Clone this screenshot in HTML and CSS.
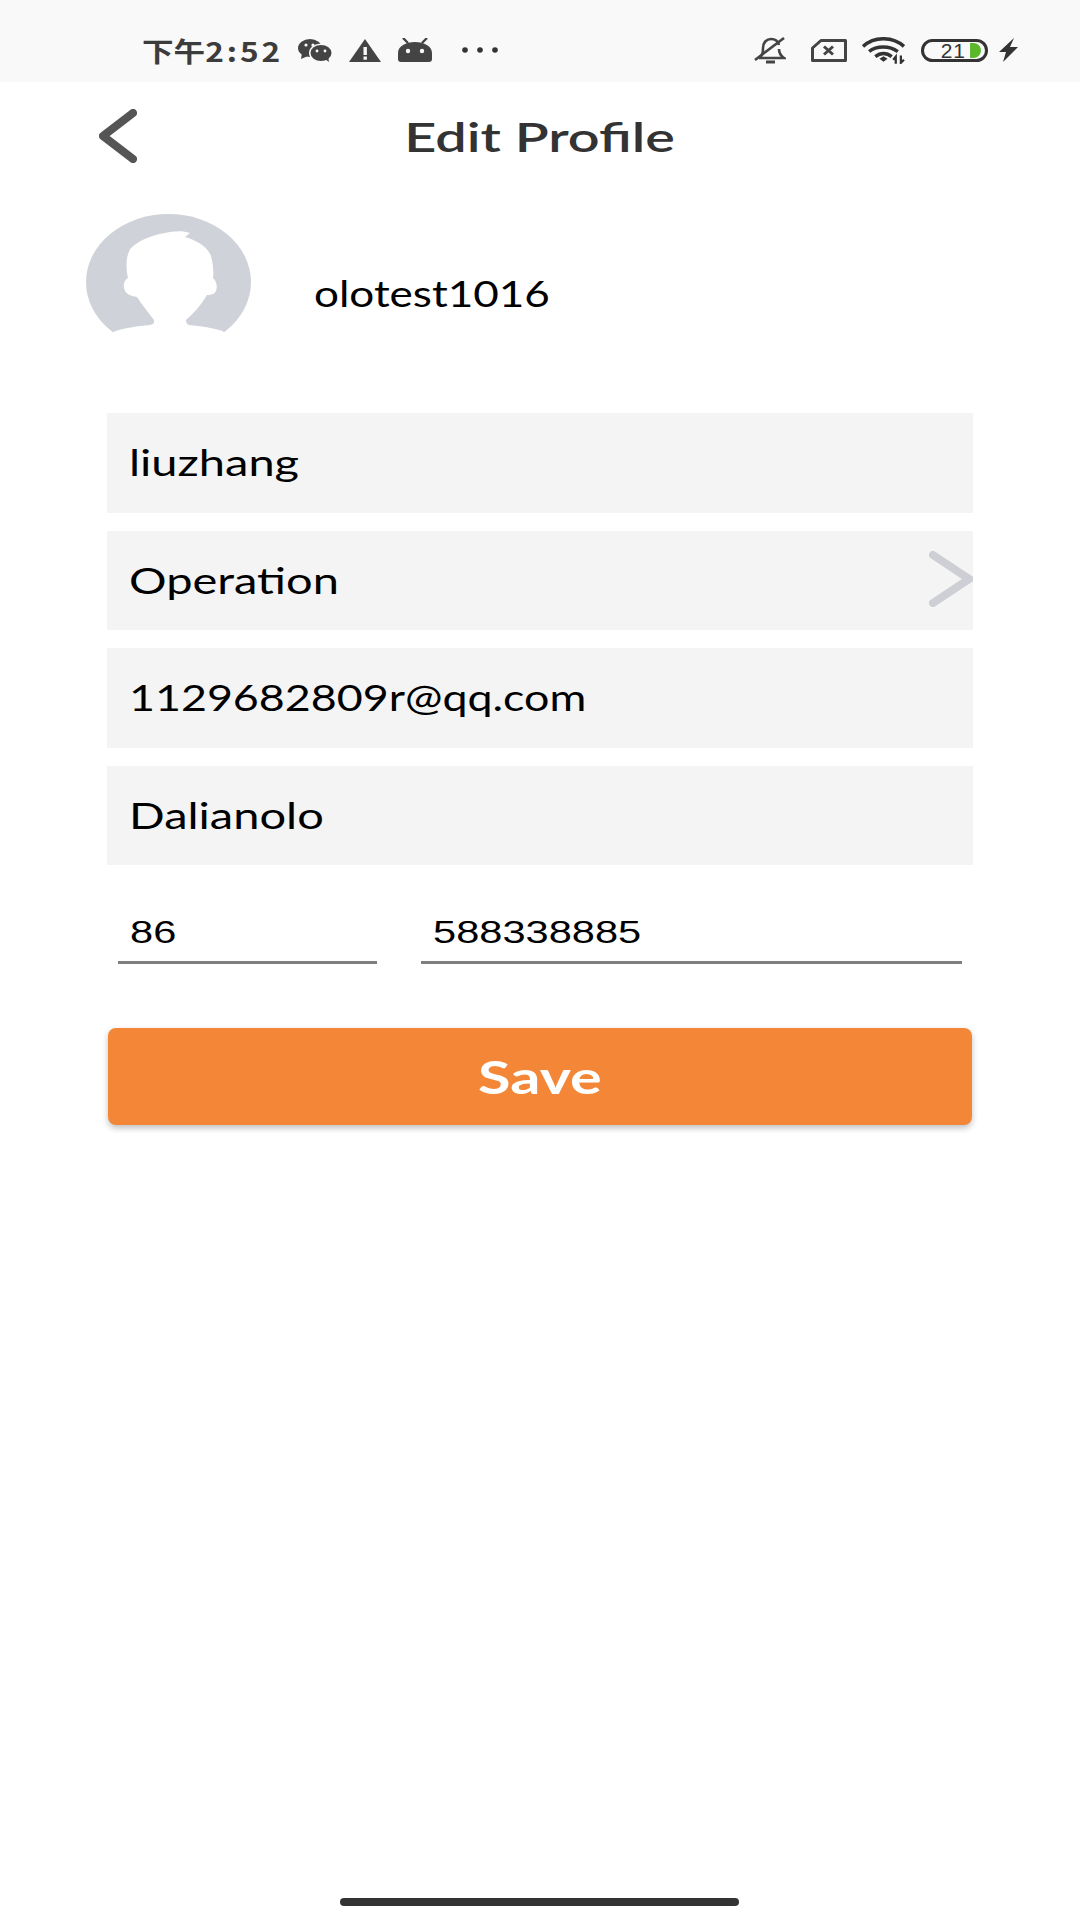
FILE: index.html
```html
<!DOCTYPE html>
<html lang="en">
<head>
<meta charset="utf-8">
<title>Edit Profile</title>
<link rel="stylesheet" href="styles.css">
</head>
<body>
<div class="statusbar">
  <span class="clock">下午<span class="clock-time">2:52</span></span>
  <svg class="ic-wechat" viewBox="0 0 34 23"><ellipse cx="12" cy="9" rx="12" ry="9" fill="#444"/><path d="M4 14 L3 20 L10 17Z" fill="#444"/><ellipse cx="23" cy="14" rx="12" ry="9.5" fill="#f9f9f9"/><ellipse cx="23" cy="14" rx="10.5" ry="8" fill="#444"/><path d="M27 20 L31 23 L30 17Z" fill="#444"/><circle cx="8" cy="6" r="1.6" fill="#f9f9f9"/><circle cx="15" cy="6" r="1.6" fill="#f9f9f9"/><circle cx="19" cy="12" r="1.4" fill="#f9f9f9"/><circle cx="27" cy="12" r="1.4" fill="#f9f9f9"/></svg>
  <svg class="ic-warn" viewBox="0 0 32 23"><path d="M16 0 L32 23 L0 23Z" fill="#444"/><rect x="14.5" y="8" width="3.4" height="8" fill="#f9f9f9"/><rect x="14.5" y="17.5" width="3.4" height="3.2" fill="#f9f9f9"/></svg>
  <svg class="ic-android" viewBox="0 0 34 24"><path d="M0 24 V15 C0 8 8 4 17 4 C26 4 34 8 34 15 V21 Q34 24 31 24 H3 Q0 24 0 21Z" fill="#444"/><path d="M5 0 L10 5 M29 0 L24 5" stroke="#444" stroke-width="2.4" fill="none"/><circle cx="10" cy="13" r="2.2" fill="#f9f9f9"/><circle cx="24" cy="13" r="2.2" fill="#f9f9f9"/></svg>
  <svg class="ic-dots" viewBox="0 0 36 6"><circle cx="3" cy="3" r="2.8" fill="#333"/><circle cx="18" cy="3" r="2.8" fill="#333"/><circle cx="33" cy="3" r="2.8" fill="#333"/></svg>
  <div class="status-right">
    <svg class="ic-bell" viewBox="0 0 32 27"><path d="M5 21 C9 18 9 15 9 11 C9 5 13 2 17 2 C21 2 24 4 25 8 M25 12 C25 16 27 19 30 21 H5" fill="none" stroke="#444" stroke-width="2.6"/><path d="M12 25 H21" stroke="#444" stroke-width="3"/><path d="M1 23 L30 1" stroke="#444" stroke-width="2.6"/></svg>
    <svg class="ic-sim" viewBox="0 0 36 23"><path d="M10 1.500 H34.500 V21.500 H1.500 V9Z" fill="none" stroke="#444" stroke-width="3" stroke-linejoin="round"/><path d="M13 7.500 L22 15.500 M22 7.500 L13 15.500" stroke="#444" stroke-width="3"/></svg>
    <svg class="ic-wifi" viewBox="0 0 43 26"><path d="M1 9 C12 -1 30 -1 41 9" fill="none" stroke="#333" stroke-width="3.400"/><path d="M7 14 C14 8 27 8 35 14" fill="none" stroke="#333" stroke-width="3.400"/><path d="M13 19 C18 15 24 15 29 19" fill="none" stroke="#333" stroke-width="3.400"/><path d="M17 21 L21 18.500 L25 21 L21 24Z" fill="#333"/><path d="M33 26 V19 L30.500 22 M38 18 V25 L41 22" fill="none" stroke="#333" stroke-width="2.200"/></svg>
    <div class="battery"><span class="battery-num">21</span><svg class="battery-fill" viewBox="0 0 13 18"><path d="M0 0 H4 C9 0 13 4 13 9 C13 14 9 18 4 18 H0Z" fill="#5ab82a"/></svg></div>
    <svg class="ic-bolt" viewBox="0 0 19 24"><path d="M15 0 L0 14 H7 L4 24 L19 9 H11Z" fill="#333"/></svg>
  </div>
</div>

<header class="topbar">
  <svg class="back" viewBox="0 0 38 54"><path d="M34 4 L4 27 L34 50" fill="none" stroke="#555" stroke-width="8" stroke-linecap="round" stroke-linejoin="round"/></svg>
  <h1 class="title"><span class="wide wide-center wide-title">Edit Profile</span></h1>
</header>

<section class="profile">
  <svg class="avatar" viewBox="0 0 165 118"><ellipse cx="82.500" cy="68" rx="82.500" ry="68" fill="#cfd2d8"/><path d="M27 118 C38 114 52 112 64 111 Q69 110 68 106 C62 98 56 91 51 83 C45 82 39 80 38 74 C37 69 39 66 42 64 C40 56 39 40 46 33 C55 25 70 20 84 18 C92 17 98 17 104 19 L99 23 C110 26 122 33 125 42 C127 50 128 58 127 64 C132 68 132 78 127 80 C124 81 122 81 121 81 C115 91 108 99 100 106 Q100 110 103 111 C115 112 127 114 137 117 L137 120 L27 120Z" fill="#fff"/></svg>
  <span class="username wide wide-narrow">olotest1016</span>
</section>

<main class="form">
  <div class="field"><span class="wide">liuzhang</span></div>
  <div class="field"><span class="wide">Operation</span>
    <svg class="chevron" viewBox="0 0 44 56"><path d="M4 4 L40 28 L4 52" fill="none" stroke="#cdcfd4" stroke-width="8" stroke-linecap="round" stroke-linejoin="miter"/></svg>
  </div>
  <div class="field"><span class="wide wide-email">1129682809r@qq.com</span></div>
  <div class="field"><span class="wide">Dalianolo</span></div>
  <div class="phone">
    <div class="phone-code"><span class="wide wide-phone">86</span></div>
    <div class="phone-num"><span class="wide wide-phone">588338885</span></div>
  </div>
  <button class="save"><span class="wide wide-center wide-save">Save</span></button>
</main>

<div class="homebar"></div>
</body>
</html>
```
FILE: styles.css
```css
* { box-sizing: border-box; }
html, body { margin: 0; padding: 0; }
body {
  width: 1080px;
  height: 1920px;
  background: #fff;
  font-family: "Lato", "Noto Sans CJK SC", sans-serif;
  display: flex;
  flex-direction: column;
  overflow: hidden;
}
.wide {
  display: inline-block;
  transform: scaleX(1.27);
  transform-origin: left center;
  white-space: nowrap;
}
.wide-center { transform-origin: center center; }
.wide-title { transform: scaleX(1.36); }
.wide-narrow { transform: scaleX(1.19); }
.wide-email { transform: scaleX(1.21); }
.wide-phone { transform: scaleX(1.3); }
.wide-save { transform: scaleX(1.29); }

/* status bar */
.statusbar {
  height: 82px;
  flex: none;
  background: #f9f9f9;
  display: flex;
  align-items: center;
  padding: 18px 62px 0 142px;
}
.clock {
  width: 139px;
  margin-right: 17px;
  font: 700 27px/1 "Noto Sans CJK SC", sans-serif;
  color: #3c3c3c;
  white-space: nowrap;
  display: inline-block;
  transform: scaleX(1.17);
  transform-origin: left center;
}
.clock-time { letter-spacing: 2.5px; }
.ic-wechat { width: 34px; height: 23px; margin-right: 17px; }
.ic-warn { width: 32px; height: 23px; margin-right: 17px; }
.ic-android { width: 34px; height: 24px; margin-right: 30px; }
.ic-dots { width: 36px; height: 6px; }
.status-right { margin-left: auto; display: flex; align-items: center; }
.ic-bell { width: 32px; height: 27px; margin-right: 25px; }
.ic-sim { width: 36px; height: 23px; margin-right: 15px; }
.ic-wifi { width: 44px; height: 27px; margin-right: 15px; }
.battery {
  width: 67px;
  height: 23px;
  border: 3px solid #333;
  border-radius: 12px;
  margin-right: 11px;
  display: flex;
  align-items: center;
  justify-content: flex-end;
  padding-right: 3px;
}
.battery-num { font: 400 21px/1 "Liberation Sans", sans-serif; color: #333; margin-right: 3px; letter-spacing: 1px; }
.battery-fill { width: 13px; height: 15px; }
.ic-bolt { width: 19px; height: 24px; }

/* header */
.topbar {
  height: 108px;
  flex: none;
  display: grid;
  grid-template-columns: 1fr;
  align-items: center;
  justify-items: center;
  position: relative;
}
.back {
  position: absolute;
  left: 99px;
  top: 27px;
  width: 38px;
  height: 54px;
}
.title {
  margin: 0;
  font-size: 41px;
  font-weight: 600;
  color: #333;
  line-height: 1;
}

/* profile */
.profile {
  height: 118px;
  flex: none;
  margin-top: 24px;
  padding-left: 86px;
  display: flex;
  align-items: flex-start;
}
.avatar { width: 165px; height: 118px; flex: none; }
.username {
  margin-left: 63px;
  margin-top: 56px;
  font-size: 37px;
  line-height: 46px;
  color: #000;
}

/* form */
.form {
  margin: 81px 107px 0;
  display: flex;
  flex-direction: column;
  gap: 18px;
}
.field {
  height: 99.5px;
  background: #f4f4f4;
  padding-left: 22px;
  padding-bottom: 2px;
  display: flex;
  align-items: center;
  justify-content: space-between;
  font-size: 37px;
  color: #000;
}
.chevron { width: 44px; height: 56px; flex: none; }
.phone {
  display: flex;
  margin: 0 11px;
  height: 81px;
  gap: 44px;
  font: 400 32px/1 "Liberation Sans", sans-serif;
  color: #000;
}
.phone-code, .phone-num {
  border-bottom: 3px solid #7f7f7f;
  padding-left: 12px;
  padding-bottom: 13px;
  display: flex;
  align-items: flex-end;
}
.phone-code { width: 259px; }
.phone-num { width: 541px; }
.save {
  margin: 46px 1px 0;
  height: 97px;
  background: #f48737;
  border: 0;
  border-radius: 8px;
  color: #fff;
  font: 700 46px/1 "Lato", sans-serif;
  box-shadow: 0 3px 6px rgba(0, 0, 0, .25);
}

.homebar {
  margin: auto 340px 14px;
  height: 8px;
  flex: none;
  width: 399px;
  background: #333;
  border-radius: 4px;
}
```
